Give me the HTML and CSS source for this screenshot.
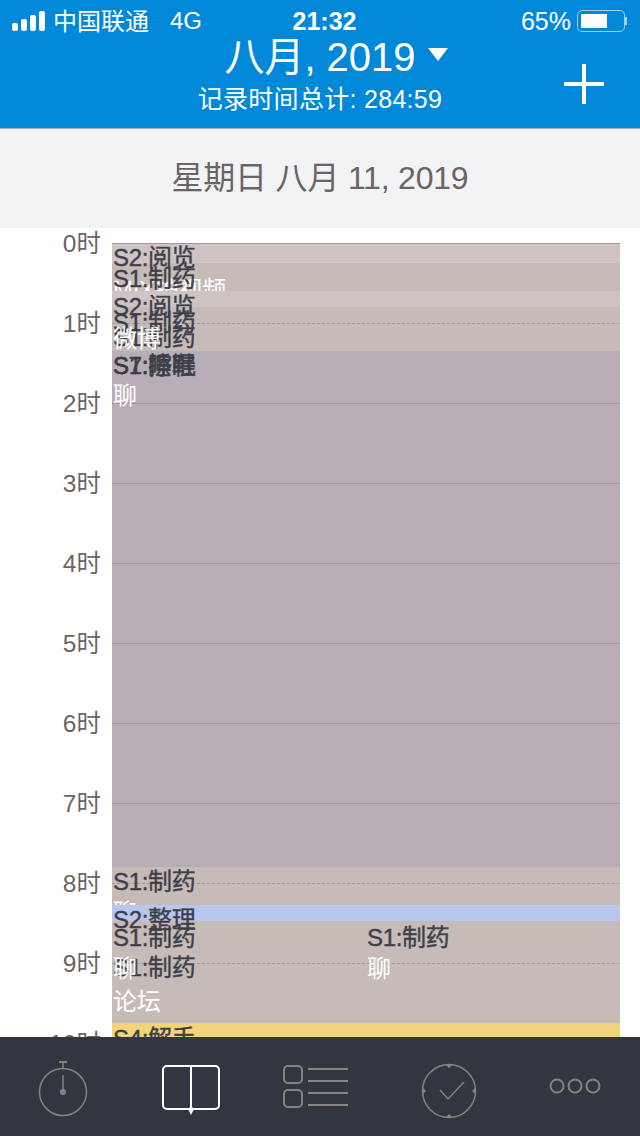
FILE: index.html
```html
<!DOCTYPE html>
<html lang="zh">
<head>
    <meta charset="UTF-8">
    <meta name="viewport" content="width=device-width, initial-scale=1.0">
    <title>八月, 2019</title>
    <link rel="stylesheet" href="styles.css">
</head>
<body>
<div class="app">
    <header class="top">
        <div class="status">
            <div class="status-left">
                <span class="signal"><i class="s1"></i><i class="s2"></i><i class="s3"></i><i class="s4"></i></span>
                <span class="carrier">中国联通</span>
                <span class="net">4G</span>
            </div>
            <div class="clock">21:32</div>
            <div class="status-right">
                <span>65%</span>
                <span class="battery"><span class="battery-fill"></span></span>
                <span class="battery-tip"></span>
            </div>
        </div>
        <div class="title-row">
            <span class="month">八月, 2019</span>
            <span class="caret"></span>
        </div>
        <div class="total">记录时间总计: 284:59</div>
        <svg class="add" width="44" height="44" viewBox="0 0 44 44">
            <path d="M22 2V42M2 22H42" stroke="#fff" stroke-width="4" fill="none"/>
        </svg>
    </header>

    <div class="date-bar">星期日 八月 11, 2019</div>

    <main class="timeline">
        <div class="hours">
            <div class="hour">0时</div>
            <div class="hour">1时</div>
            <div class="hour">2时</div>
            <div class="hour">3时</div>
            <div class="hour">4时</div>
            <div class="hour">5时</div>
            <div class="hour">6时</div>
            <div class="hour">7时</div>
            <div class="hour">8时</div>
            <div class="hour">9时</div>
            <div class="hour">10时</div>
        </div>
        <div class="canvas">
            <div class="ev light" style="top:0;height:20px"></div>
            <div class="ev tan" style="top:20px;height:28px"></div>
            <span class="lbl white" style="top:32px;left:1px">MIX护视频</span>
            <div class="ev light" style="top:48px;height:16px"></div>
            <div class="ev tan" style="top:64px;height:44px"></div>
            <div class="ev mauve" style="top:108px;height:516px"></div>
            <div class="ev tan" style="top:624px;height:38px"></div>
            <span class="lbl white" style="top:655px;left:1px">聊</span>
            <div class="ev blue" style="top:662px;height:16px"></div>
            <div class="ev tan" style="top:678px;height:102px"></div>
            <div class="ev yellow" style="top:780px;height:40px"></div>

            <div class="line" style="top:0"></div>
            <div class="line dash" style="top:80px"></div>
            <div class="line" style="top:160px"></div>
            <div class="line" style="top:240px"></div>
            <div class="line" style="top:320px"></div>
            <div class="line" style="top:400px"></div>
            <div class="line" style="top:480px"></div>
            <div class="line" style="top:560px"></div>
            <div class="line dash" style="top:640px"></div>
            <div class="line dash" style="top:720px"></div>

            <span class="lbl" style="top:0;left:1px">S2:阅览</span>
            <span class="lbl" style="top:21px;left:1px">S1:制药</span>
            <span class="lbl" style="top:49px;left:1px">S2:阅览</span>
            <span class="lbl" style="top:65px;left:1px">S1:制药</span>
            <span class="lbl" style="top:80px;left:1px">S1:制药</span>
            <span class="lbl white" style="top:81px;left:1px">微博</span>
            <span class="lbl" style="top:108px;left:1px">S1:睡眠</span>
            <span class="lbl" style="top:108px;left:1px">S7:擦鞋</span>
            <span class="lbl white" style="top:138px;left:1px">聊</span>
            <span class="lbl" style="top:624px;left:1px">S1:制药</span>
            <span class="lbl" style="top:662px;left:1px">S2:整理</span>
            <span class="lbl" style="top:680px;left:1px">S1:制药</span>
            <span class="lbl" style="top:710px;left:1px">S1:制药</span>
            <span class="lbl white" style="top:711px;left:1px">聊</span>
            <span class="lbl white" style="top:744px;left:1px">论坛</span>
            <span class="lbl" style="top:680px;left:255px">S1:制药</span>
            <span class="lbl white" style="top:711px;left:255px">聊</span>
            <span class="lbl" style="top:781px;left:1px">S4:解手</span>
        </div>
    </main>

    <nav class="tabs">
        <svg class="tab-timer" width="50" height="56" viewBox="0 0 50 56" fill="none" stroke="#8a807e" stroke-width="1.5">
            <circle cx="25" cy="31" r="23.5"/>
            <path d="M25 1V7M25 14V31"/>
            <path d="M21 1H29" stroke-width="2"/>
            <circle cx="25" cy="31" r="3" fill="#8a807e" stroke="none"/>
        </svg>
        <svg class="tab-book" width="60" height="52" viewBox="0 0 60 52" fill="none" stroke="#fff" stroke-width="2">
            <rect x="2" y="2" width="56" height="43" rx="4"/>
            <path d="M30 1V46"/>
            <path d="M27 45L30 42L33 45L30 51Z" fill="#fff" stroke="none"/>
        </svg>
        <svg class="tab-list" width="66" height="44" viewBox="0 0 66 44" fill="none" stroke="#8a807e" stroke-width="2">
            <rect x="1" y="1" width="18" height="17" rx="4"/>
            <rect x="1" y="25" width="18" height="17" rx="4"/>
            <path d="M25 4H65M25 16H65M25 28H65M25 40H65"/>
        </svg>
        <svg class="tab-check" width="56" height="56" viewBox="0 0 56 56" fill="none" stroke="#8a807e" stroke-width="1.5">
            <circle cx="28" cy="28" r="26.5"/>
            <path d="M19 27L27 36L43 19"/>
            <path d="M24 1H32L28 5ZM24 55H32L28 51ZM1 24V32L5 28ZM55 24V32L51 28Z" fill="#8a807e" stroke="none"/>
        </svg>
        <svg class="tab-more" width="52" height="16" viewBox="0 0 52 16" fill="none" stroke="#8a807e" stroke-width="2">
            <circle cx="8" cy="8" r="6.5"/>
            <circle cx="26" cy="8" r="6.5"/>
            <circle cx="44" cy="8" r="6.5"/>
        </svg>
    </nav>
</div>
</body>
</html>
```

FILE: styles.css
```css
* {
    box-sizing: border-box;
}

body {
    margin: 0;
    font-family: "Liberation Sans", "Noto Sans CJK SC", sans-serif;
}

.app {
    width: 640px;
    height: 1136px;
    display: flex;
    flex-direction: column;
    overflow: hidden;
    background: #fff;
}

/* top bar */
.top {
    position: relative;
    height: 129px;
    flex: none;
    background: #0288d9;
    border-bottom: 1px solid #a9adb0;
    color: #fff;
}

.status {
    height: 42px;
    padding: 0 13px 0 12px;
    display: flex;
    align-items: center;
    justify-content: space-between;
    font-size: 25px;
}

.status-left,
.status-right {
    width: 200px;
    display: flex;
    align-items: center;
}

.status-right {
    justify-content: flex-end;
}

.signal {
    display: flex;
    align-items: flex-end;
    gap: 3px;
    height: 20px;
    margin-right: 8px;
}

.signal i {
    width: 6px;
    background: #fff;
    border-radius: 2px;
}

.s1 { height: 8px; }
.s2 { height: 12px; }
.s3 { height: 16px; }
.s4 { height: 20px; }

.carrier {
    font-size: 24px;
    margin-top: -3px;
}

.net {
    font-size: 24px;
    margin-left: 21px;
}

.clock {
    font-weight: bold;
    margin-left: 10px;
}

.battery {
    width: 48px;
    height: 22px;
    margin-left: 6px;
    padding: 3px;
    border: 1.5px solid #9fd0ee;
    border-radius: 5px;
}

.battery-fill {
    display: block;
    width: 65%;
    height: 100%;
    background: #fff;
}

.battery-tip {
    width: 2px;
    height: 8px;
    background: #9fd0ee;
}

.title-row {
    height: 34px;
    margin-top: -5px;
    display: flex;
    align-items: center;
    justify-content: center;
}

.month {
    font-size: 40px;
    margin-left: 32px;
}

.caret {
    width: 0;
    height: 0;
    margin-left: 12px;
    border-left: 10px solid transparent;
    border-right: 10px solid transparent;
    border-top: 13px solid #fff;
}

.total {
    margin-top: 8px;
    text-align: center;
    font-size: 25px;
    letter-spacing: 0.3px;
}

.add {
    position: absolute;
    right: 34px;
    top: 62px;
}

/* date */
.date-bar {
    height: 99px;
    flex: none;
    padding-bottom: 8px;
    background: #f2f3f5;
    color: #6b6463;
    font-size: 32px;
    letter-spacing: -0.2px;
    display: flex;
    align-items: center;
    justify-content: center;
}

/* day view */
.timeline {
    flex: 1;
    position: relative;
    overflow: hidden;
    display: flex;
    padding-top: 15px;
}

.hours {
    width: 112px;
    flex: none;
    padding-right: 11px;
    text-align: right;
    color: #6b6463;
    font-size: 24.5px;
}

.hour {
    height: 80px;
    line-height: 1;
    margin-top: -11px;
    margin-bottom: 11px;
}

.canvas {
    position: relative;
    width: 508px;
    height: 900px;
}

.ev {
    position: absolute;
    left: 0;
    right: 0;
}

.light { background: #cfc3c3; }
.tan { background: #c6bbb6; }
.mauve { background: #b9adb6; }
.blue { background: #b9c6ee; }
.yellow { background: #f2d47c; }

.line {
    position: absolute;
    left: 0;
    right: 0;
    height: 1px;
    background: #a2989c;
}

.dash {
    background: repeating-linear-gradient(to right, #a2989c 0, #a2989c 3px, transparent 3px, transparent 5px);
}

.lbl {
    position: absolute;
    font-size: 24px;
    line-height: 30px;
    letter-spacing: -0.3px;
    color: #3c3f4a;
    -webkit-text-stroke: 0.4px #3c3f4a;
    white-space: nowrap;
}

.white {
    color: #fff;
    -webkit-text-stroke: 0;
}

/* tabs */
.tabs {
    height: 99px;
    flex: none;
    background: #323640;
    display: flex;
    align-items: flex-start;
}

.tab-timer {
    margin: 24px 0 0 38px;
}

.tab-book {
    margin: 27px 0 0 73px;
}

.tab-list {
    margin: 28px 0 0 62px;
}

.tab-check {
    margin: 26px 0 0 72px;
}

.tab-more {
    margin: 41px 0 0 72px;
}
```
